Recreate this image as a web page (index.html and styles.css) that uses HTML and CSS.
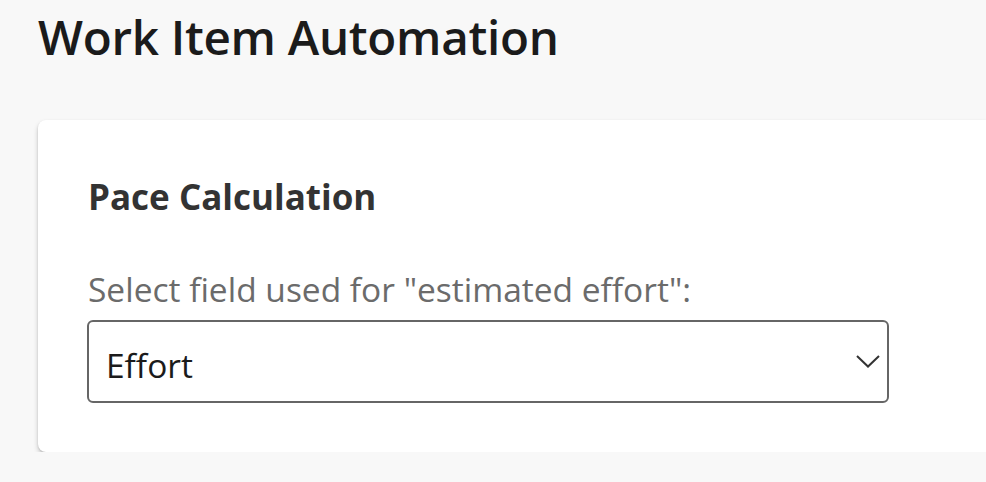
FILE: index.html
```html
<!DOCTYPE html>
<html lang="en">
<head>
<meta charset="utf-8">
<title>Work Item Automation</title>
<link rel="stylesheet" href="styles.css">
</head>
<body>
<div class="page">
  <h1 class="page-title">Work Item Automation</h1>
  <section class="card">
    <h2 class="card-title">Pace Calculation</h2>
    <label class="field-label">Select field used for "estimated effort":</label>
    <div class="dropdown">
      <span class="dropdown-value">Effort</span>
      <svg class="chevron" width="24" height="13" viewBox="0 0 24 13" aria-hidden="true">
        <path d="M1 1 L12 11.5 L23 1" fill="none" stroke="#333" stroke-width="2"/>
      </svg>
    </div>
  </section>
</div>
</body>
</html>
```

FILE: styles.css
```css
html, body {
  margin: 0;
  padding: 0;
  background: #f8f8f8;
  overflow: hidden;
  font-family: "Open Sans", "Noto Sans", sans-serif;
}

.page {
  padding: 9px 0 0 38px;
}

.page-title {
  margin: 0;
  font-size: 47.6px;
  font-weight: 600;
  line-height: 56px;
  color: #1b1b1b;
  letter-spacing: -0.3px;
}

.card {
  margin-top: 55px;
  height: 332px;
  box-sizing: border-box;
  background: #fff;
  border-radius: 8px 0 0 8px;
  box-shadow: 0 3px 5px rgba(0, 0, 0, 0.2), 0 1px 2px rgba(0, 0, 0, 0.12);
  padding: 54px 0 0 50px;
}

.card-title {
  margin: 0;
  font-size: 35px;
  font-weight: 700;
  line-height: 46px;
  color: #333;
}

.field-label {
  display: block;
  margin-top: 50px;
  font-size: 33.5px;
  line-height: 38px;
  color: #6b6b6b;
}

.dropdown {
  margin-top: 12px;
  margin-left: -1px;
  width: 802px;
  height: 83px;
  box-sizing: border-box;
  border: 2px solid #666;
  border-radius: 6px;
  display: flex;
  align-items: center;
  justify-content: space-between;
  padding: 0 7px 0 17px;
}

.dropdown-value {
  padding-top: 6px;
  font-size: 33.5px;
  color: #1b1b1b;
}

.chevron {
  display: block;
}
```
